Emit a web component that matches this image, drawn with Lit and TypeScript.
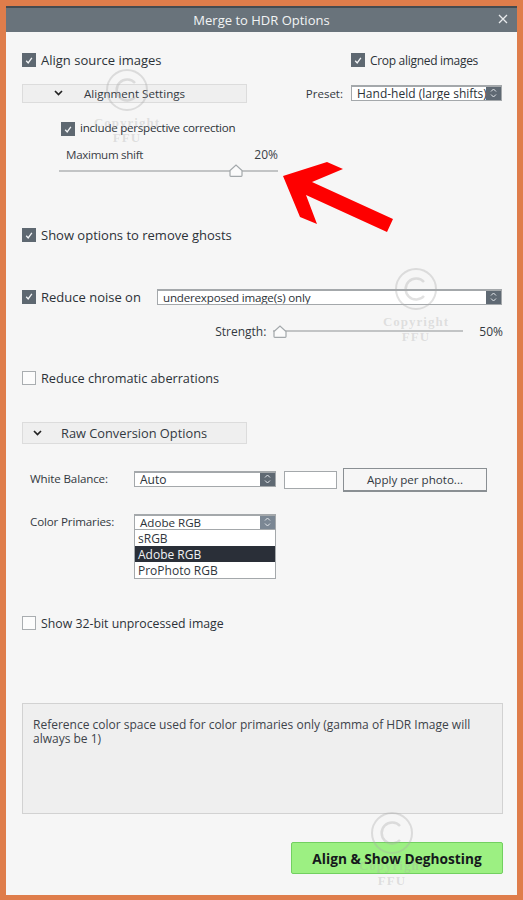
import { LitElement, html, css, svg } from "lit";
import { customElement } from "lit/decorators.js";

const spinner = html`<span class="spin"><svg width="7" height="10" viewBox="0 0 7 10"><path d="M1 3.5 3.5 1 6 3.5M1 6.5 3.5 9 6 6.5" fill="none" stroke="#e4e8ec" stroke-width="1"/></svg></span>`;

const check = (on: boolean, label: string, cls = "") => html`<label class="chk ${cls}"><span class="box ${on ? "on" : ""}">${on
  ? html`<svg width="13" height="13" viewBox="0 0 13 13"><path d="M3.5 6.8 5.6 9.2 9.6 3.6" fill="none" stroke="#f4f6f8" stroke-width="1.4"/></svg>`
  : ""}</span><span class="txt">${label}</span></label>`;

const chev = svg`<path d="M1 1 4.5 4.5 8 1" fill="none" stroke="#222" stroke-width="1.7"/>`;

const thumb = html`<svg class="thumb" width="14" height="13" viewBox="0 0 14 13"><path d="M1 11.5V6.5L7 1l6 5.5v5a.8.8 0 0 1-.8.8H1.8a.8.8 0 0 1-.8-.8Z" fill="#fbfbfb" stroke="#a3a8ab" stroke-width="1.2"/></svg>`;

@customElement("app-root")
export class AppRoot extends LitElement {
  static styles = css`
    :host { display: block; width: 523px; height: 900px; background: #df7d4b; font-family: "Open Sans", "Noto Sans", sans-serif; font-size: 12px; color: #33393f; }
    * { box-sizing: border-box; }
    .frame { position: relative; margin: 0 6px; top: 6px; height: 889px; background: #f6f6f6; overflow: hidden; }
    .title { height: 26px; background: #69737b; border-top: 2px solid #454b50; color: #f2f4f5; display: flex; align-items: center; justify-content: center; font-size: 13px; position: relative; padding-bottom: 1px; }
    .close { position: absolute; right: 7px; top: 4px; }
    .content { padding: 0 14px 0 16px; }
    .row { display: flex; align-items: center; }
    .between { justify-content: space-between; }
    .chk { display: inline-flex; align-items: center; gap: 5px; font-size: 13px; color: #2c3238; }
    .chk.small { font-size: 11.6px; letter-spacing: -0.25px; }
    .chk.small .txt { margin-bottom: 3px; }
    .box { width: 14px; height: 14px; flex: none; border: 1px solid #a9adb0; background: #fcfcfc; }
    .box.on { background: #5e6871; border-color: #5e6871; display: flex; align-items: center; justify-content: center; }
    .bar { width: 225px; background: #efefef; border: 1px solid #dcdcdc; display: flex; align-items: center; font-size: 11.6px; color: #33393f; }
    .bar svg { flex: none; }
    .select { display: flex; align-items: center; background: #fff; border: 1px solid #a4a8ab; border-top-width: 2px; height: 16px; color: #2c3238; font-size: 12px; padding: 0 0 1px 5px; overflow: hidden; position: relative; white-space: nowrap; }
    .spin { position: absolute; right: 0; top: -2px; bottom: -1px; width: 15px; background: #5f6973; display: flex; align-items: center; justify-content: center; }
    .spin.light { background: #7b8794; }
    .slider { position: relative; height: 13px; display: flex; align-items: center; }
    .slider .line { flex: 1; height: 2px; background: #c2c4c5; }
    .thumb { position: absolute; top: 0; }
    .r1 { height: 16px; margin-top: 20px; }
    .r1 .crop { margin-right: 25px; font-size: 12px; letter-spacing: -0.3px; }
    .r2 { height: 20px; margin-top: 15px; }
    .r2 .bar { height: 19px; padding-left: 31px; }
    .r2 .bar svg { margin-right: 21px; }
    .preset { display: flex; align-items: center; margin-right: 1px; gap: 8px; font-size: 11.5px; }
    .preset .select { width: 151px; padding-right: 15px; padding-left: 5px; font-size: 12px; }
    .r3 { height: 16px; margin-top: 18px; padding-left: 39px; }
    .r4 { height: 16px; margin-top: 9px; margin-left: 44px; width: 212px; color: #3a4046; }
    .r4 .name { font-size: 11.6px; letter-spacing: -0.3px; }
    .s1 { margin: 2px 0 0 37px; width: 219px; }
    .s1 .thumb { left: 170px; }
    .r5 { height: 16px; margin-top: 50px; }
    .r6 { height: 17px; margin-top: 45px; }
    .r6 .chk { width: 135px; }
    .r6 .select { width: 345px; align-self: flex-end; font-size: 11.6px; letter-spacing: -0.2px; }
    .r7 { height: 16px; margin-top: 18px; justify-content: flex-end; }
    .s2 { width: 190px; margin: 0 16px 0 7px; }
    .s2 .thumb { left: 0; }
    .r8 { height: 16px; margin-top: 31px; }
    .r8 .chk { font-size: 12.7px; }
    .r9 { height: 22px; margin-top: 36px; }
    .r9 .bar { height: 22px; padding-left: 10px; font-size: 12.8px; }
    .r9 .bar svg { margin-right: 19px; }
    .fields { padding-left: 8px; }
    .wb { height: 24px; margin-top: 24px; align-items: flex-start; }
    .lab { width: 104px; flex: none; color: #33393f; font-size: 11.6px; letter-spacing: -0.15px; }
    .wb .lab { margin-top: 3px; }
    .wb .select { width: 142px; margin-top: 3px; }
    .swatch { width: 53px; height: 18px; background: #fff; border: 1px solid #a4a8ab; margin: 3px 0 0 8px; }
    .btn { width: 144px; height: 24px; margin-left: 6px; border: 1px solid #8a8f93; border-bottom-width: 2px; background: #f6f6f6; display: flex; align-items: center; justify-content: center; color: #33393f; font-size: 11.6px; }
    .cp { height: 64px; margin-top: 22px; align-items: flex-start; }
    .cp .lab { line-height: 16px; }
    .dd { width: 142px; }
    .dd .select { height: 16px; font-size: 11.6px; }
    .list { background: #fff; border: 1px solid #a4a8ab; border-top: 0; display: flex; flex-direction: column; }
    .opt { height: 16px; line-height: 18px; padding-left: 3px; color: #30363c; }
    .opt.sel { background: #2a2f38; color: #f0f2f4; }
    .r10 { height: 16px; margin-top: 37px; }
    .r10 .chk { font-size: 12.3px; }
    .info { height: 111px; margin-top: 72px; background: #efefef; border: 1px solid #d2d2d2; padding: 14px 10px 0; line-height: 14px; font-size: 12px; color: #3d434a; }
    .foot { display: flex; justify-content: flex-end; margin-top: 28px; }
    .go { width: 212px; height: 32px; border: 1px solid #72d060; border-radius: 2px; background: #9cf082; display: flex; align-items: center; justify-content: center; font-weight: 700; font-size: 13.7px; color: #15191c; }
    .mark { position: absolute; width: 90px; display: flex; flex-direction: column; align-items: center; color: rgba(170,170,170,.32); font-family: "Liberation Serif", serif; pointer-events: none; }
    .mark svg { margin-bottom: 3px; }
    .mark .c1 { font-size: 13px; font-weight: 700; letter-spacing: 1px; line-height: 15px; }
    .mark .c2 { font-size: 13px; font-weight: 700; letter-spacing: 1px; line-height: 15px; }
    .m1 { left: 76px; top: 62px; }
    .m2 { left: 365px; top: 261px; }
    .m3 { left: 341px; top: 805px; }
    .arrow { position: absolute; left: 0; top: 0; pointer-events: none; }
  `;

  mark(cls: string) {
    return html`<div class="mark ${cls}">
      <svg width="44" height="44" viewBox="0 0 44 44"><circle cx="22" cy="22" r="20" fill="none" stroke="rgba(170,170,170,.35)" stroke-width="2"/><path d="M30 15a10.500 10.500 0 1 0 0 14" fill="none" stroke="rgba(170,170,170,.35)" stroke-width="2.500"/></svg>
      <span class="c1">Copyright</span><span class="c2">FFU</span>
    </div>`;
  }

  render() {
    return html`<div class="frame">
      <div class="title">Merge to HDR Options
        <svg class="close" width="14" height="14" viewBox="0 0 14 14"><path d="M3 3l8 8M11 3l-8 8" stroke="#e8ebed" stroke-width="1.300"/></svg>
      </div>
      <div class="content">
        <div class="row between r1">${check(true, "Align source images")}${check(true, "Crop aligned images", "crop")}</div>
        <div class="row between r2">
          <div class="bar"><svg width="9" height="6" viewBox="0 0 9 6">${chev}</svg>Alignment Settings</div>
          <div class="preset"><span>Preset:</span><div class="select">Hand-held (large shifts)${spinner}</div></div>
        </div>
        <div class="row r3">${check(true, "include perspective correction", "small")}</div>
        <div class="row between r4"><span class="name">Maximum shift</span><span>20%</span></div>
        <div class="slider s1"><div class="line"></div>${thumb}</div>
        <div class="row r5">${check(true, "Show options to remove ghosts")}</div>
        <div class="row r6">${check(true, "Reduce noise on")}<div class="select">underexposed image(s) only${spinner}</div></div>
        <div class="row r7"><span>Strength:</span><div class="slider s2"><div class="line"></div>${thumb}</div><span>50%</span></div>
        <div class="row r8">${check(false, "Reduce chromatic aberrations")}</div>
        <div class="row r9"><div class="bar"><svg width="9" height="6" viewBox="0 0 9 6">${chev}</svg>Raw Conversion Options</div></div>
        <div class="fields">
          <div class="row wb"><span class="lab">White Balance:</span><div class="select">Auto${spinner}</div><div class="swatch"></div><div class="btn">Apply per photo...</div></div>
          <div class="row cp"><span class="lab">Color Primaries:</span>
            <div class="dd"><div class="select">Adobe RGB<span class="spin light"><svg width="7" height="10" viewBox="0 0 7 10"><path d="M1 3.5 3.5 1 6 3.5M1 6.5 3.5 9 6 6.5" fill="none" stroke="#e4e8ec"/></svg></span></div>
              <div class="list"><div class="opt">sRGB</div><div class="opt sel">Adobe RGB</div><div class="opt">ProPhoto RGB</div></div>
            </div>
          </div>
        </div>
        <div class="row r10">${check(false, "Show 32-bit unprocessed image")}</div>
        <div class="info">Reference color space used for color primaries only (gamma of HDR Image will always be 1)</div>
        <div class="foot"><div class="go">Align &amp; Show Deghosting</div></div>
      </div>
      ${this.mark("m1")}${this.mark("m2")}${this.mark("m3")}
      <svg class="arrow" width="511" height="300" viewBox="6 6 511 300"><polygon points="283,176 327,162 343,169 312,182 393,219 387,232 306,195 317,224 300,217" fill="#fe0000"/></svg>
    </div>`;
  }
}
